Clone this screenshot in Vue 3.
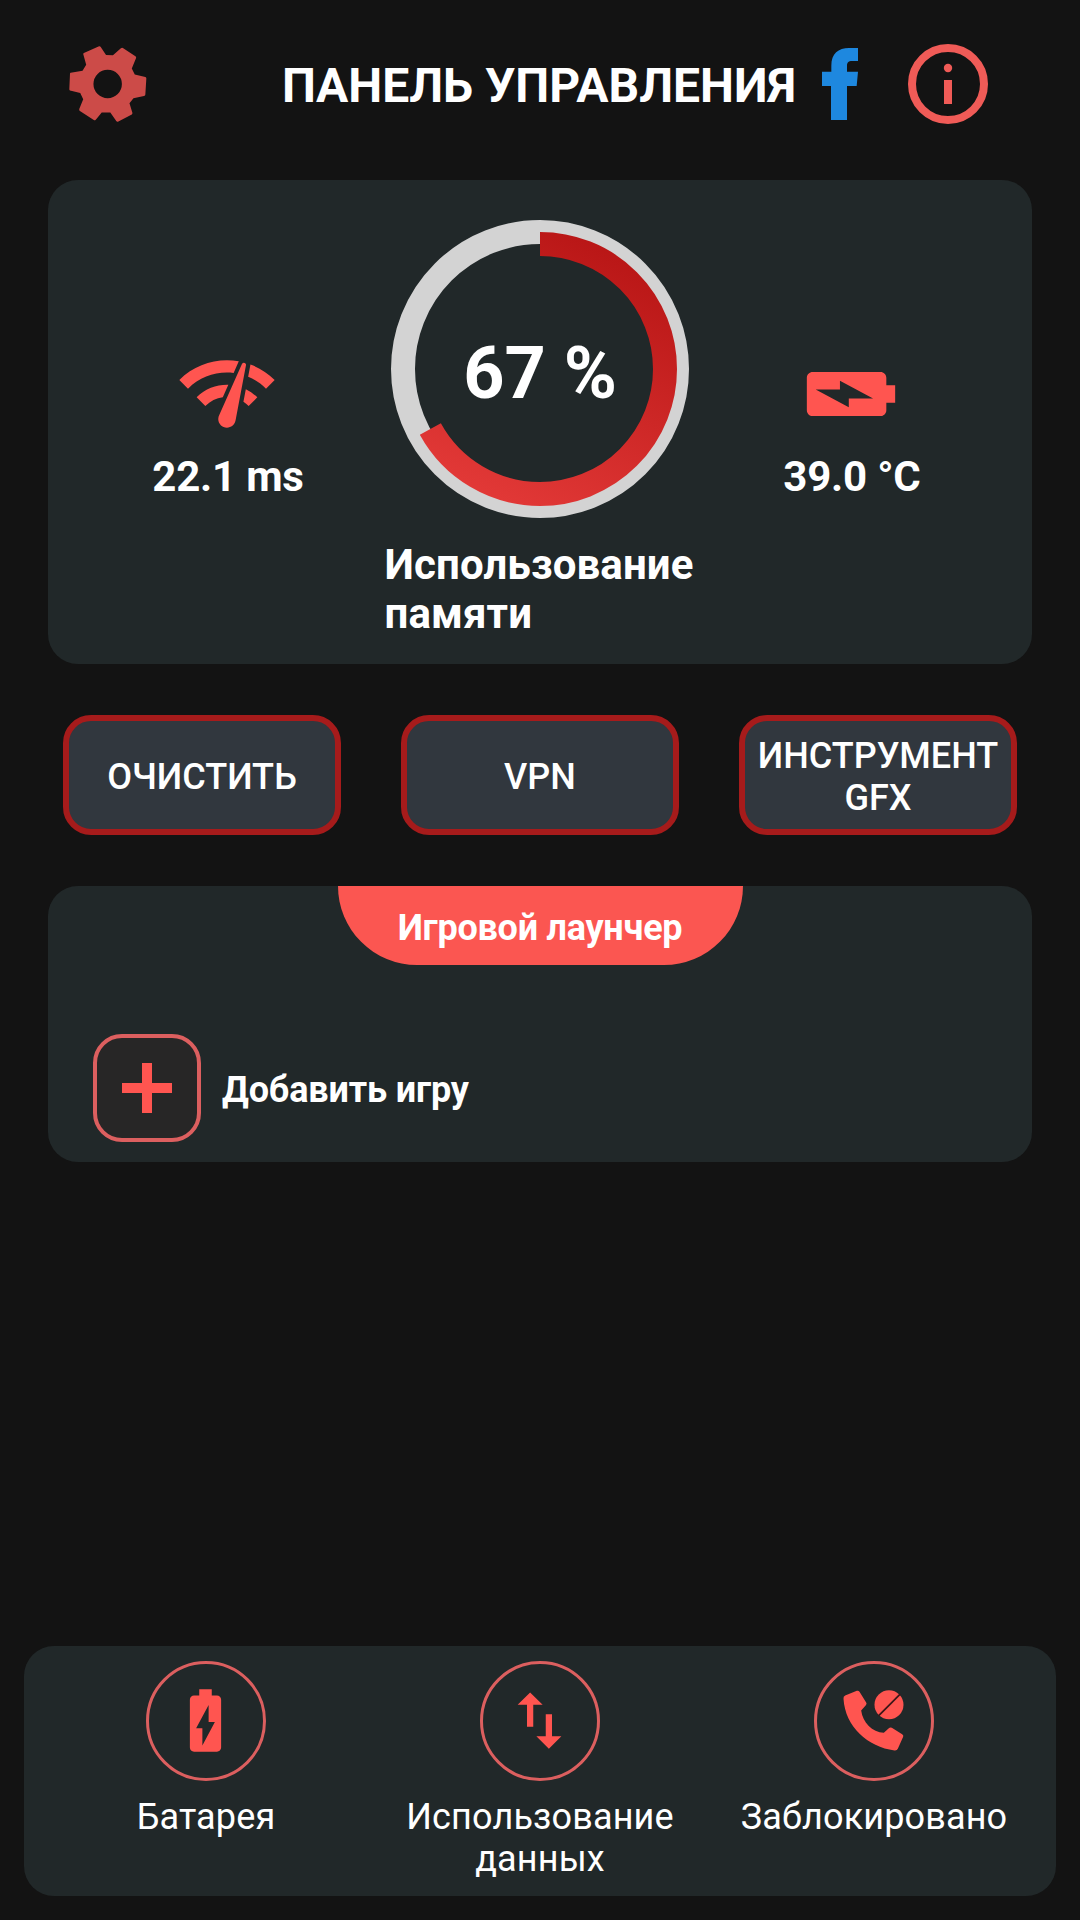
<script setup>
import { ref, computed } from 'vue'

const memory = ref(67)
const ping = ref('22.1 ms')
const temperature = ref('39.0 °C')

const actions = ['ОЧИСТИТЬ', 'VPN', 'ИНСТРУМЕНТ GFX']

const radius = 125
const circumference = 2 * Math.PI * radius
const dash = computed(() => `${circumference * memory.value / 100} ${circumference}`)
</script>
<template>
	<div class="screen">
		<header class="top-bar">
			<svg class="gear" viewBox="87 75 236 234">
				<path fill-rule="evenodd" d="M92 158L128 152L139 134L130 101Q130 99 132 98L178 78Q181 77 183 80L199 104L220 105L244 84Q247 81 250 83L288 108Q291 110 290 113L277 145L286 163L318 171Q321 172 321 175L318 224Q318 228 314 228L282 235L270 250L279 280Q279 283 277 284L235 306Q232 307 230 304L212 278H186L168 300Q165 303 162 301L120 274Q117 272 118 268L130 238L121 219L90 212Q88 211 88 208L90 161Q90 158 92 158ZM204 149A43 43 0 1 0 204 235A43 43 0 1 0 204 149Z" />
			</svg>
			<h1>ПАНЕЛЬ УПРАВЛЕНИЯ</h1>
			<svg class="facebook" viewBox="186 84 108 216">
				<path d="M213 300V198H186V155H214V137C214 101 235 84 267 84H294V123H277C264 123 261 128 261 139V155H294L290 198H261V300Z" />
			</svg>
			<svg class="info" viewBox="0 0 80 80">
				<circle cx="40" cy="40" r="36" fill="none" stroke="#f05b57" stroke-width="8" />
				<circle cx="40" cy="24" r="4.2" fill="#f05b57" />
				<rect x="36" y="36" width="8" height="24" fill="#f05b57" />
			</svg>
		</header>

		<section class="card stats">
			<div class="stat">
				<svg class="stat-icon" viewBox="0 0 24 24">
					<path d="M15.9 5c-.17 0-.32.09-.41.23l-.07.15-5.18 11.65c-.16.29-.26.61-.26.96 0 1.11.9 2.01 2.01 2.01.96 0 1.77-.68 1.96-1.59l.01-.03L16.4 5.5c0-.28-.22-.5-.5-.5zM1 9l2 2c2.88-2.88 6.79-4.08 10.53-3.62l1.19-2.68C9.89 3.84 4.74 5.27 1 9zm20 2l2-2c-1.64-1.64-3.55-2.82-5.59-3.57l-.53 2.82c1.5.62 2.9 1.53 4.12 2.75zm-4 4l2-2c-.8-.8-1.7-1.42-2.66-1.89l-.55 2.92c.42.27.83.59 1.21.97zM5 13l2 2c1.13-1.13 2.56-1.79 4.03-2l1.28-2.88c-2.63-.08-5.3.87-7.31 2.88z" />
				</svg>
				<p>{{ ping }}</p>
			</div>
			<div class="memory">
				<svg class="ring" viewBox="0 0 298 298">
					<defs>
						<linearGradient id="ring-fill" x1="0.75" y1="0" x2="0.25" y2="1">
							<stop offset="0" stop-color="#b51313" />
							<stop offset="1" stop-color="#e63c3a" />
						</linearGradient>
						<mask id="ring-mask" maskUnits="userSpaceOnUse" x="0" y="0" width="298" height="298">
							<circle cx="149" cy="149" :r="radius" fill="none" stroke="#fff" stroke-width="24" :stroke-dasharray="dash" transform="rotate(-90 149 149)" />
						</mask>
					</defs>
					<circle cx="149" cy="149" r="137" fill="none" stroke="#d3d3d3" stroke-width="24" />
					<rect width="298" height="298" fill="url(#ring-fill)" mask="url(#ring-mask)" />
					<text x="149" y="177.5" text-anchor="middle">{{ memory }} %</text>
				</svg>
				<p class="memory-label">Использование<br>памяти</p>
			</div>
			<div class="stat">
				<svg class="stat-icon battery" viewBox="0 0 24 24">
					<path d="M15.67 4H14V2h-4v2H8.33C7.6 4 7 4.6 7 5.33v15.33C7 21.4 7.6 22 8.33 22h7.33c.74 0 1.34-.6 1.34-1.33V5.33C17 4.6 16.4 4 15.67 4zM11 20v-5.5H9L13 7v5.5h2L11 20z" />
				</svg>
				<p>{{ temperature }}</p>
			</div>
		</section>

		<div class="actions">
			<button v-for="action in actions" :key="action">{{ action }}</button>
		</div>

		<section class="card launcher">
			<h2>Игровой лаунчер</h2>
			<div class="add-game">
				<button class="add-button">
					<svg viewBox="0 0 50 50">
						<path d="M20 0h10v20h20v10H30v20H20V30H0V20h20z" />
					</svg>
				</button>
				<span>Добавить игру</span>
			</div>
		</section>

		<nav class="card bottom-bar">
			<div class="tab">
				<div class="circle">
					<svg viewBox="0 0 24 24">
						<path d="M15.67 4H14V2h-4v2H8.33C7.6 4 7 4.6 7 5.33v15.33C7 21.4 7.6 22 8.33 22h7.33c.74 0 1.34-.6 1.34-1.33V5.33C17 4.6 16.4 4 15.67 4zM11 20v-5.5H9L13 7v5.5h2L11 20z" />
					</svg>
				</div>
				<span>Батарея</span>
			</div>
			<div class="tab">
				<div class="circle">
					<svg viewBox="0 0 24 24">
						<path d="M9 3L5 6.99h3V14h2V6.99h3L9 3zm7 14.01V10h-2v7.01h-3L15 21l4-3.99h-3z" />
					</svg>
				</div>
				<span>Использование<br>данных</span>
			</div>
			<div class="tab">
				<div class="circle">
					<svg viewBox="349.5 130.5 225 225">
						<path d="M372 178Q371 171 377 168L412 154Q417 152 420 157L440 189Q443 193 439 197L425 213C430 250 458 278 493 280L508 266Q512 262 517 265L548 284Q553 287 551 292L535 328Q532 334 525 333C445 323 377 262 372 178Z" />
						<circle cx="508.5" cy="196" r="43.5" />
						<path d="M477 229L542 164" stroke="#3a1718" stroke-width="5" />
					</svg>
				</div>
				<span>Заблокировано</span>
			</div>
		</nav>
	</div>
</template>
<style>
body {
	margin: 0;
	background: #131313;
}
</style>
<style scoped>
.screen {
	display: flex;
	flex-direction: column;
	box-sizing: border-box;
	width: 1080px;
	height: 1920px;
	padding-bottom: 24px;
	background: #131313;
	color: #fff;
	font-family: Roboto, "Noto Sans", sans-serif;
}
h1, h2, p {
	margin: 0;
}
button {
	color: inherit;
	font: inherit;
}
svg {
	display: block;
	fill: #ff5550;
}
.top-bar {
	display: flex;
	align-items: center;
	height: 168px;
	margin-bottom: 12px;
	padding: 0 92px 0 69px;
}
.gear {
	width: 78px;
	height: 78px;
	fill: #cc4b48;
}
h1 {
	margin-left: auto;
	padding-top: 4px;
	font-size: 48px;
	font-weight: 700;
	line-height: 56px;
	white-space: nowrap;
}
.facebook {
	width: 36px;
	height: 72px;
	margin: 0 50px 0 26px;
	fill: #1e88df;
}
.info {
	width: 80px;
	height: 80px;
}
.card {
	background: #212829;
	border-radius: 30px;
}
.stats {
	display: flex;
	justify-content: space-between;
	box-sizing: border-box;
	height: 484px;
	margin: 0 48px;
	padding: 40px 28px 0;
	font-size: 42px;
	font-weight: 700;
	line-height: 49px;
}
.stat {
	display: flex;
	flex-direction: column;
	align-items: center;
	width: 304px;
	padding-top: 121px;
	letter-spacing: -0.2px;
}
.stat-icon {
	width: 104px;
	height: 104px;
	margin: 0 2px 7px 0;
}
.battery {
	width: 106px;
	height: 106px;
	margin-bottom: 5px;
	transform: rotate(90deg);
}
.memory {
	display: flex;
	flex-direction: column;
	align-items: center;
}
.memory-label {
	padding-right: 2px;
	letter-spacing: 0.12px;
}
.ring {
	width: 298px;
	height: 298px;
	margin-bottom: 22px;
}
.ring text {
	fill: #fff;
	font-size: 72px;
	font-weight: 700;
}
.actions {
	display: flex;
	justify-content: space-between;
	margin: 51px 63px;
}
.actions button {
	box-sizing: border-box;
	width: 278px;
	height: 120px;
	padding: 4px 0 0;
	background: #31373e;
	border: 6px solid #a61b1b;
	border-radius: 28px;
	font-size: 36px;
	font-weight: 500;
	line-height: 42px;
}
.launcher {
	height: 276px;
	margin: 0 48px;
}
h2 {
	width: 405px;
	height: 79px;
	margin: 0 auto;
	background: #fb5651;
	border-radius: 0 0 79px 79px;
	font-size: 36px;
	font-weight: 700;
	letter-spacing: -0.25px;
	line-height: 85px;
	text-align: center;
}
.add-game {
	display: flex;
	align-items: center;
	gap: 21px;
	margin: 69px 0 0 45px;
	font-size: 36px;
	font-weight: 700;
	letter-spacing: -0.15px;
}
.add-game span {
	padding-top: 4px;
}
.add-button {
	display: flex;
	align-items: center;
	justify-content: center;
	box-sizing: border-box;
	width: 108px;
	height: 108px;
	padding: 0;
	background: #272626;
	border: 4px solid #dc5f5f;
	border-radius: 29px;
}
.add-button svg {
	width: 50px;
	height: 50px;
}
.bottom-bar {
	display: flex;
	box-sizing: border-box;
	height: 250px;
	margin: auto 24px 0;
	padding: 15px 15px 0;
}
.tab {
	display: flex;
	flex-direction: column;
	align-items: center;
	gap: 15px;
	width: 334px;
	font-size: 36px;
	letter-spacing: 0.15px;
	line-height: 42px;
	text-align: center;
}
.circle {
	display: flex;
	align-items: center;
	justify-content: center;
	box-sizing: border-box;
	width: 120px;
	height: 120px;
	border: 3px solid #dc5f5f;
	border-radius: 50%;
}
.circle svg {
	width: 75px;
	height: 75px;
	margin: 0 2px 2px 0;
}
</style>
